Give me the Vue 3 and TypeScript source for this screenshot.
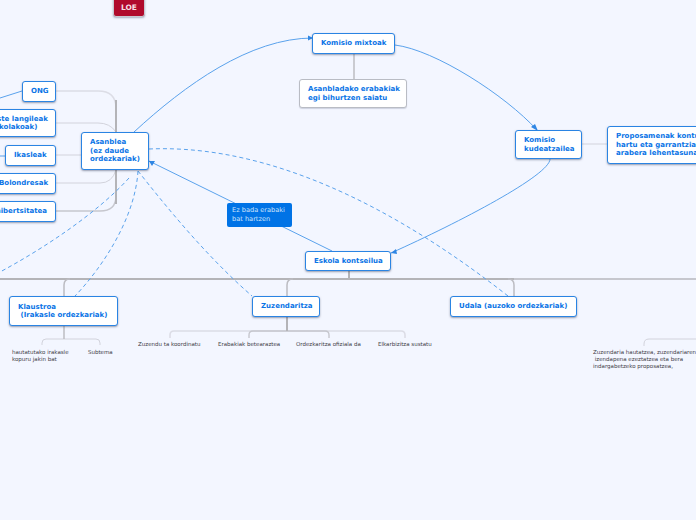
<script setup lang="ts">
interface MapNode {
  id: string
  x: number
  y: number
  w: number
  h: number
  kind: string
  lines: string[]
}
interface Leaf {
  x: number
  y: number
  lines: string[]
}

const nodes: MapNode[] = [
  { id: 'loe', x: 113, y: -6, w: 32, h: 23, kind: 'red', lines: ['LOE'] },
  { id: 'ong', x: 22, y: 81, w: 34, h: 21, kind: 'main', lines: ['ONG'] },
  { id: 'oste', x: -22, y: 109, w: 78, h: 28, kind: 'main', lines: ['Beste langileak', '(eskolakoak)'] },
  { id: 'ikas', x: 5, y: 145, w: 51, h: 21, kind: 'main', lines: ['Ikasleak'] },
  { id: 'bol', x: -10, y: 173, w: 66, h: 21, kind: 'main', lines: ['Bolondresak'] },
  { id: 'uni', x: -19, y: 201, w: 75, h: 21, kind: 'main', lines: ['Unibertsitatea'] },
  { id: 'asan', x: 81, y: 132, w: 68, h: 38, kind: 'main', lines: ['Asanblea', '(ez daude', 'ordezkariak)'] },
  { id: 'mix', x: 312, y: 33, w: 83, h: 21, kind: 'main', lines: ['Komisio mixtoak'] },
  { id: 'erab', x: 299, y: 79, w: 108, h: 29, kind: 'grey', lines: ['Asanbladako erabakiak', 'egi bihurtzen saiatu'] },
  { id: 'kude', x: 515, y: 130, w: 67, h: 29, kind: 'main', lines: ['Komisio', 'kudeatzailea'] },
  { id: 'prop', x: 607, y: 126, w: 120, h: 38, kind: 'main', lines: ['Proposamenak kontuan', 'hartu eta garrantzian', 'arabera lehentasunak'] },
  { id: 'ez', x: 227, y: 203, w: 65, h: 24, kind: 'solid', lines: ['Ez bada erabaki', 'bat hartzen'] },
  { id: 'esk', x: 305, y: 251, w: 86, h: 20, kind: 'main', lines: ['Eskola kontseilua'] },
  { id: 'kla', x: 9, y: 296, w: 109, h: 30, kind: 'main', lines: ['Klaustroa', '\u00a0(Irakasle ordezkariak)'] },
  { id: 'zuz', x: 252, y: 296, w: 68, h: 21, kind: 'main', lines: ['Zuzendaritza'] },
  { id: 'uda', x: 450, y: 296, w: 127, h: 21, kind: 'main', lines: ['Udala (auzoko ordezkariak)'] },
]

const leaves: Leaf[] = [
  { x: 12, y: 349, lines: ['hautatutako irakasle', 'kopuru jakin bat'] },
  { x: 88, y: 349, lines: ['Subtema'] },
  { x: 138, y: 341, lines: ['Zuzendu ta koordinatu'] },
  { x: 218, y: 341, lines: ['Erabakiak betearaztea'] },
  { x: 296, y: 341, lines: ['Ordezkaritza ofiziala da'] },
  { x: 378, y: 341, lines: ['Elkarbizitza sustatu'] },
  { x: 593, y: 349, lines: ['Zuzendaria hautatzea, zuzendariaren', '\u00a0izendapena ezeztatzea eta bera', 'indargabetzeko proposatzea,'] },
]

const boxStyle = (n: MapNode) => ({
  left: `${n.x}px`,
  top: `${n.y}px`,
  width: `${n.w}px`,
  height: `${n.h}px`,
})
const leafStyle = (l: Leaf) => ({ left: `${l.x}px`, top: `${l.y}px` })
</script>

<template>
  <div class="map">
    <svg class="wires" width="696" height="520" viewBox="0 0 696 520" fill="none">
      <g class="grey-light">
        <path d="M56 91H98Q116 91 116 108" class="wide" />
        <path d="M56 123H98Q110 123 116 132" />
        <path d="M56 155H81" />
        <path d="M56 183H100Q112 183 116 170" />
        <path d="M56 211H100Q116 211 116 196" class="firm" />
        <path d="M582 144H607" />
        <path d="M42 345V343Q42 339 46 339H96Q100 339 100 343V345" />
        <path d="M170 338V335Q170 331 174 331H401Q405 331 405 335V338" class="wide" />
        <path d="M249 338V335Q249 331 253 331H325Q329 331 329 335V338" class="firm" />
        <path d="M644 346V344Q644 339 649 339H696" />
        <path d="M514 279H696" class="firm thick" />
      </g>
      <g class="grey-thick">
        <path d="M0 279H514" />
        <path d="M116 100V204" />
        <path d="M349 271V279" />
        <path d="M287 317V331" />
      </g>
      <g class="grey-mid">
        <path d="M64 296V285Q64 279 70 279" />
        <path d="M287 296V285Q287 279 293 279" />
        <path d="M514 296V285Q514 279 508 279" />
        <path d="M64 326V339" />
        <path d="M354 54V79" />
      </g>
      <g class="blue">
        <path d="M134 132C185 85 250 38 313 38" />
        <path d="M395 45C435 50 505 95 537 130" />
        <path d="M550 159C550 175 460 222 391 253" />
        <path d="M332 251L149 161" />
        <path d="M22 91L0 98" />
        <path d="M5 156H0" />
      </g>
      <g class="blue dashed">
        <path d="M149 149C240 145 360 180 508 296" />
        <path d="M138 171C165 205 205 255 252 296" />
        <path d="M138 171C135 220 100 270 75 296" />
        <path d="M129 178C100 210 50 245 0 272" />
      </g>
      <g class="tips">
        <path d="M313 38L308 35.500V40.500Z" />
        <path d="M538 131L531 127L535 124Z" />
        <path d="M391 253L396 249L397 254Z" />
        <path d="M149 161L155 161L152 166Z" />
      </g>
    </svg>

    <div
      v-for="n in nodes"
      :key="n.id"
      class="node"
      :class="n.kind"
      :style="boxStyle(n)"
    >
      <span v-for="(line, i) in n.lines" :key="i" class="line">{{ line }}</span>
    </div>

    <div v-for="(l, i) in leaves" :key="i" class="leaf" :style="leafStyle(l)">
      <span v-for="(line, j) in l.lines" :key="j" class="line">{{ line }}</span>
    </div>
  </div>
</template>

<style scoped>
.map {
  position: relative;
  width: 696px;
  height: 520px;
  overflow: hidden;
  background: #f3f6ff;
  font-family: "DejaVu Sans", sans-serif;
}
.wires {
  position: absolute;
  left: 0;
  top: 0;
}
.grey-thick path {
  stroke: #b4b4b8;
  stroke-width: 2;
}
.grey-mid path {
  stroke: #bcbcc2;
  stroke-width: 1.5;
}
.grey-light path {
  stroke: #d2d3dc;
  stroke-width: 1;
}
.grey-light path.wide {
  stroke: #dcdde6;
  stroke-width: 1.6;
}
.grey-light path.firm {
  stroke: #c6c7ce;
  stroke-width: 1.4;
}
.grey-light path.thick {
  stroke-width: 2;
}
.blue path {
  stroke: #5aa2ec;
  stroke-width: 1;
}
.dashed path {
  stroke-dasharray: 4 3;
}
.tips path {
  fill: #2f86e4;
}
.node {
  position: absolute;
  box-sizing: border-box;
  display: flex;
  flex-direction: column;
  justify-content: center;
  padding-left: 8px;
  border-radius: 3px;
  font-size: 7px;
  font-weight: 700;
  line-height: 8.5px;
  white-space: nowrap;
}
.main {
  background: #fff;
  border: 1.5px solid #2a84e3;
  color: #0a74e6;
  box-shadow: 0 1px 2px rgba(60, 70, 100, 0.5);
}
.grey {
  background: #fff;
  border: 1px solid #b9bcc4;
  color: #0a74e6;
  box-shadow: 0 1px 1px rgba(60, 70, 100, 0.2);
}
.red {
  align-items: center;
  padding: 6px 0 0;
  background: #b00a2c;
  border: 1px solid #c8c8d0;
  color: #f6dfe3;
  font-size: 7.5px;
  box-shadow: 0 1px 2px rgba(60, 70, 100, 0.4);
}
.solid {
  background: #0073e6;
  color: #cfe4fb;
  font-weight: 400;
  font-size: 6.6px;
  padding-left: 5px;
  line-height: 9px;
  border-radius: 2px;
}
.line {
  display: block;
}
.leaf {
  position: absolute;
  font-size: 5.5px;
  line-height: 6.8px;
  color: #3f4048;
  white-space: nowrap;
}
</style>
